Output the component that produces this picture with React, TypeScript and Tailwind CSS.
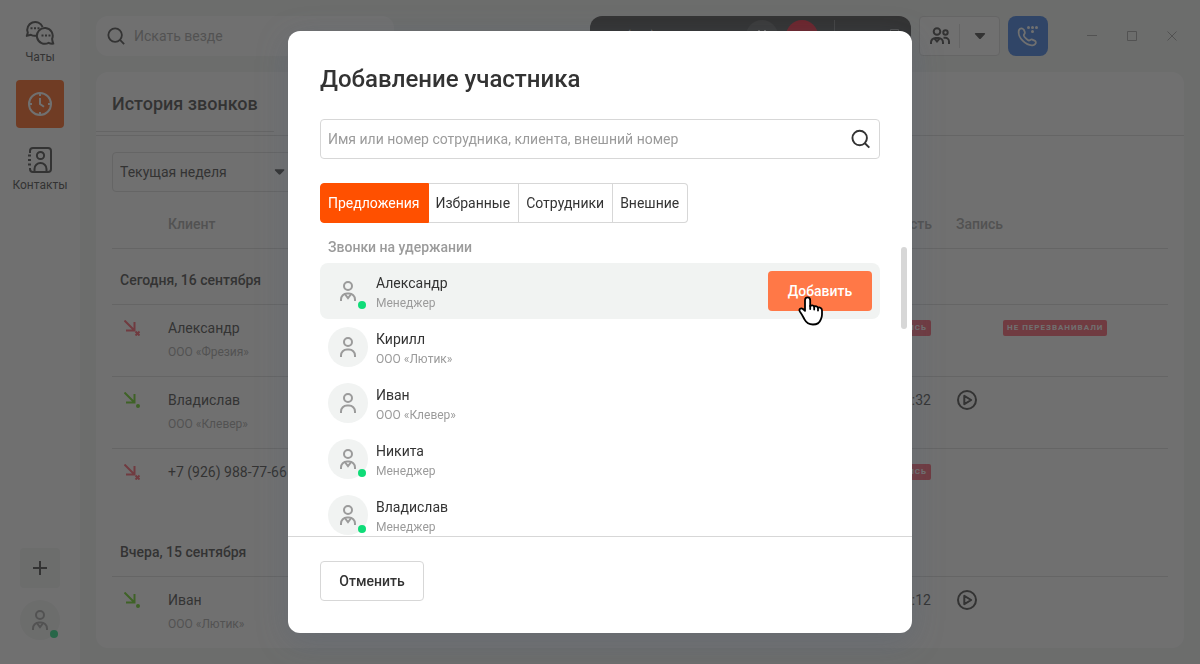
import type { ReactNode } from 'react';
import clsx from 'clsx';

const CONTACTS = [
  { name: 'Александр', note: 'Менеджер', employee: true, active: true },
  { name: 'Кирилл', note: 'ООО «Лютик»', employee: false, active: false },
  { name: 'Иван', note: 'ООО «Клевер»', employee: false, active: false },
  { name: 'Никита', note: 'Менеджер', employee: true, active: false },
  { name: 'Владислав', note: 'Менеджер', employee: true, active: false },
];

const TABS = ['Предложения', 'Избранные', 'Сотрудники', 'Внешние'];

type Call = { client: string; company?: string; duration?: string; missed?: boolean; status?: string };

const HISTORY: { day: string; calls: Call[] }[] = [
  {
    day: 'Сегодня, 16 сентября',
    calls: [
      { client: 'Александр', company: 'ООО «Фрезия»', missed: true, status: 'НЕ ПЕРЕЗВАНИВАЛИ' },
      { client: 'Владислав', company: 'ООО «Клевер»', duration: '01:32' },
      { client: '+7 (926) 988-77-66', missed: true },
    ],
  },
  { day: 'Вчера, 15 сентября', calls: [{ client: 'Иван', company: 'ООО «Лютик»', duration: '02:12' }] },
];

function SearchIcon() {
  return (
    <svg width="20" height="20" viewBox="0 0 20 20" fill="none" stroke="currentColor" strokeWidth="2" aria-hidden="true">
      <circle cx="9" cy="9" r="7.5" />
      <path d="M14.4 14.4 19 19" />
    </svg>
  );
}

function CaretIcon() {
  return (
    <svg width="12" height="8" viewBox="0 0 12 8" fill="currentColor" aria-hidden="true">
      <path d="M1.6 1h8.8c.7 0 1 .8.5 1.3L7 6.4a1.4 1.4 0 0 1-2 0L1.1 2.3C.6 1.8.9 1 1.6 1Z" />
    </svg>
  );
}

function PersonIcon({ employee }: { employee: boolean }) {
  return (
    <svg width="16" height="20" viewBox="0 0 16 20" fill="none" stroke="currentColor" strokeWidth="2" aria-hidden="true">
      <circle cx="8" cy="5" r="4" />
      <path d="M1 20v-1.500a6 6 0 0 1 6-6h2a6 6 0 0 1 6 6V20" />
      {employee && <path d="M4.800 13 8 17.200 11.200 13" />}
    </svg>
  );
}

function ChatsIcon() {
  return (
    <svg width="30" height="26" viewBox="0 0 30 26" fill="none" stroke="currentColor" strokeWidth="2" strokeLinejoin="round" aria-hidden="true">
      <path d="M11.500 16.600a7.800 7.800 0 0 1-5.600-.8L1.800 16.900l1-3.200A7.900 7.900 0 1 1 17.600 8" />
      <path d="M27.100 19.900a7.900 7.900 0 1 0-3.500 3.900c1.500.8 3 1 4.700.8-.7-1.500-1-3-1.200-4.700Z" />
      <path
        d="M5.500 8.200h2v2h-2zM9 8.200h2v2H9zM12.500 8.200h2v2h-2zM16.500 15.600h2v2h-2zM20 15.600h2v2h-2zM23.500 15.600h2v2h-2z"
        fill="currentColor"
        stroke="none"
      />
    </svg>
  );
}

function ClockIcon() {
  return (
    <svg width="24" height="24" viewBox="0 0 24 24" fill="none" stroke="currentColor" strokeWidth="2" aria-hidden="true">
      <circle cx="12" cy="12" r="11" />
      <path d="M12 1v3M12 20v3M1 12h3M20 12h3M12 6v6l4 2.800" />
    </svg>
  );
}

function ContactsIcon() {
  return (
    <svg width="26" height="28" viewBox="0 0 26 28" fill="none" stroke="currentColor" strokeWidth="2" aria-hidden="true">
      <path d="M3 7V5a3 3 0 0 1 3-3h15a3 3 0 0 1 3 3v18a3 3 0 0 1-3 3H6a3 3 0 0 1-3-3v-1" />
      <path d="M1 9.500h3M1 14h3M1 18.500h3" />
      <circle cx="13.500" cy="9.500" r="3.600" />
      <path d="M7.500 26v-3a6 6 0 0 1 12 0v3" />
    </svg>
  );
}

function GroupIcon() {
  return (
    <svg width="20" height="18" viewBox="0 0 20 18" fill="none" stroke="currentColor" strokeWidth="2" aria-hidden="true">
      <circle cx="7" cy="4.500" r="3.300" />
      <circle cx="15.500" cy="5.500" r="2.200" />
      <path d="M1 17v-1.500a4.500 4.500 0 0 1 4.500-4.500h3a4.500 4.500 0 0 1 4.500 4.500V17" />
      <path d="M4.500 11.500 7 14.500l2.500-3M13.500 10.800h1.700a3.800 3.800 0 0 1 3.800 3.800V17" />
    </svg>
  );
}

function DialIcon() {
  return (
    <svg width="22" height="22" viewBox="0 0 22 22" fill="none" stroke="currentColor" strokeWidth="1.800" strokeLinejoin="round" aria-hidden="true">
      <path d="M5.300 3.600c-1.500-.8-3.300.5-3.600 2.400-.4 2.900.9 6.600 4 9.700s6.800 4.900 9.900 4.600c1.900-.2 3.700-1.800 3.200-3.400-.2-.6-.7-1-1.300-1.300l-2.200-1c-1.700-.7-2.100 1-3.500.9-1.200-.1-4.900-3.700-5-5-.1-1.300 1.600-1.900 1-3.500l-1-2.300c-.3-.6-.9-.8-1.500-1.100Z" />
      <g fill="currentColor" stroke="none">
        <circle cx="11.500" cy="2.500" r="1.500" />
        <circle cx="15.500" cy="2.500" r="1.500" />
        <circle cx="19.500" cy="2.500" r="1.500" />
        <circle cx="15.500" cy="6.500" r="1.500" />
      </g>
    </svg>
  );
}

function CallArrow({ missed }: { missed?: boolean }) {
  return (
    <svg
      width="16"
      height="16"
      viewBox="0 0 16 16"
      fill="none"
      stroke="currentColor"
      strokeWidth="2"
      className={missed ? 'text-[#ff4d5e]' : 'text-[#5cd10a]'}
      aria-hidden="true"
    >
      <path d="m.5.500 9.500 9.500M10.500 2v8.500H2" />
      {missed ? <path d="m11.500 11.500 4 4m0-4-4 4" /> : <circle cx="14" cy="14" r="2" fill="currentColor" stroke="none" />}
    </svg>
  );
}

function PlayIcon() {
  return (
    <svg width="20" height="20" viewBox="0 0 20 20" fill="none" stroke="currentColor" strokeWidth="2" strokeLinejoin="round" aria-hidden="true">
      <circle cx="10" cy="10" r="9" />
      <path d="M7.300 5.800v8.400l6.900-4.200Z" />
    </svg>
  );
}

function HandCursor() {
  return (
    <svg width="26" height="30" viewBox="0 0 26 30" fill="#fff" stroke="#000" strokeWidth="1.800" strokeLinejoin="round" strokeLinecap="round" aria-hidden="true">
      <path d="M7 4.200c0-3.900 5.200-3.900 5.200 0V10c1.400-1.200 3.400-.8 4 .7 1.400-1 3.200-.4 3.700 1 2-.8 4.100.5 4.100 2.700v4.100c0 2.600-.7 3.600-1.300 5.100-1.200 3.400-3.400 4.900-7.700 4.900-4 0-6.600-1.500-8.500-5.100-1.300-2.500-2.300-4.700-4.500-7.700-1.700-2.600 1-4.300 3-2.700L7 14.900Z" />
      <path d="M12.200 10v3M16.200 11v2.500M20 12v2.500" fill="none" />
    </svg>
  );
}

function Avatar({ employee, plain }: { employee: boolean; plain?: boolean }) {
  return (
    <div
      className={clsx(
        'relative flex size-10 shrink-0 items-center justify-center rounded-full text-[#9b9b9b]',
        !plain && 'bg-[#f1f3f2]',
      )}
    >
      <PersonIcon employee={employee} />
      {employee && <span className="absolute right-0.5 bottom-0.5 size-2 rounded-full bg-[#0fdc78]" />}
    </div>
  );
}

function Badge({ children }: { children: ReactNode }) {
  return (
    <span className="rounded-xs bg-[#ff4d61] px-1 text-[8px] leading-4 font-bold tracking-[1px] whitespace-nowrap text-white">
      {children}
    </span>
  );
}

function Sidebar() {
  return (
    <nav className="flex w-20 shrink-0 flex-col items-center bg-white pt-[19px] pb-6 text-xs shadow-[inset_1px_0_#ffffff]">
      <a href="#chats" className="flex h-[61px] flex-col items-center">
        <ChatsIcon />
        <span className="mt-1">Чаты</span>
      </a>
      <a href="#history" aria-label="История звонков" className="flex size-12 items-center justify-center rounded bg-[#ff5000] text-white">
        <ClockIcon />
      </a>
      <a href="#contacts" className="mt-4.5 flex flex-col items-center">
        <ContactsIcon />
        <span className="mt-[3px]">Контакты</span>
      </a>
      <button type="button" aria-label="Добавить" className="mt-auto flex size-10 items-center justify-center rounded bg-[#f1f3f2]">
        <svg width="14" height="14" viewBox="0 0 14 14" stroke="currentColor" strokeWidth="2" aria-hidden="true">
          <path d="M7 0v14M0 7h14" />
        </svg>
      </button>
      <div className="mt-3">
        <Avatar employee />
      </div>
    </nav>
  );
}

function TopBar() {
  return (
    <header className="flex gap-2 pr-2 pl-4">
      <label className="mr-auto flex h-10 w-[298px] items-center rounded-xl bg-white px-[11px]">
        <SearchIcon />
        <input type="text" aria-label="Поиск" placeholder="Искать везде" className="ml-[9px] w-full text-sm outline-none placeholder:text-[#9b9b9b]" />
      </label>
      <div className="flex h-10 w-[321px] items-center rounded-xl bg-[#333333] pr-3 pl-5 text-xs text-white">
        <span className="mr-auto">+7 (926) 988-77-66</span>
        <button type="button" aria-label="Пауза" className="flex size-8 items-center justify-center rounded-full bg-[#4d4d4d]">
          <svg width="8" height="12" viewBox="0 0 8 12" stroke="currentColor" strokeWidth="2" aria-hidden="true">
            <path d="M1 0v12M7 0v12" />
          </svg>
        </button>
        <button type="button" aria-label="Завершить" className="ml-2 size-8 rounded-full bg-[#f0051e]" />
        <span className="mx-4 h-8 w-px bg-[#6b6b6b]" />
        <button type="button" aria-label="Развернуть" className="ml-8 flex h-4 w-4 justify-end">
          <svg width="9" height="16" viewBox="0 0 9 16" fill="none" stroke="#999999" aria-hidden="true">
            <path d="M.5 1.500h8v13h-8z" />
          </svg>
        </button>
      </div>
      <div className="flex h-10 items-center rounded border border-[#d9d9d9] bg-white">
        <button type="button" aria-label="Участники" className="flex w-[39px] justify-center">
          <GroupIcon />
        </button>
        <span className="h-6 w-px bg-[#d9d9d9]" />
        <button type="button" aria-label="Ещё" className="flex w-[39px] justify-center">
          <CaretIcon />
        </button>
      </div>
      <button type="button" aria-label="Набрать номер" className="flex size-10 items-center justify-center rounded-lg bg-[#2870df] text-white">
        <DialIcon />
      </button>
      <div className="ml-4 flex text-[#9b9b9b]">
        <button type="button" aria-label="Свернуть окно" className="flex size-10 items-center justify-center">
          <svg width="10" height="10" viewBox="0 0 10 10" stroke="currentColor" aria-hidden="true">
            <path d="M0 4.500h10" />
          </svg>
        </button>
        <button type="button" aria-label="Развернуть окно" className="flex size-10 items-center justify-center">
          <svg width="10" height="10" viewBox="0 0 10 10" fill="none" stroke="currentColor" aria-hidden="true">
            <path d="M.5.500h9v9h-9z" />
          </svg>
        </button>
        <button type="button" aria-label="Закрыть окно" className="flex size-10 items-center justify-center">
          <svg width="10" height="10" viewBox="0 0 10 10" stroke="currentColor" aria-hidden="true">
            <path d="m.5.500 9 9m0-9-9 9" />
          </svg>
        </button>
      </div>
    </header>
  );
}

function CallRow({ call, last }: { call: Call; last: boolean }) {
  const cell = clsx('h-18 pt-[11px] align-top leading-6', !last && 'border-b border-[#d9d9d9]');
  return (
    <tr>
      <td className={clsx(cell, 'pl-3')}>
        <div className="flex h-6 items-center">
          <CallArrow missed={call.missed} />
        </div>
      </td>
      <td className={cell}>
        <div>{call.client}</div>
        {call.company && <div className="text-xs leading-6 text-[#9b9b9b]">{call.company}</div>}
      </td>
      <td className={clsx(cell, 'pr-px')}>
        <div className="flex h-6 items-center justify-end">{call.missed ? <Badge>НЕ ДОЗВОНИЛИСЬ</Badge> : call.duration}</div>
      </td>
      <td className={clsx(cell, 'pl-6')}>
        {call.duration && (
          <button type="button" aria-label="Прослушать" className="flex h-6 w-5.5 items-center justify-center">
            <PlayIcon />
          </button>
        )}
      </td>
      <td className={cell}>
        <div className="flex h-6 items-center">{call.status && <Badge>{call.status}</Badge>}</div>
      </td>
    </tr>
  );
}

function HistoryPanel() {
  const head = 'h-[57px] border-b border-[#d9d9d9] pb-3 align-bottom font-medium leading-6 text-[#9b9b9b]';
  return (
    <section className="mx-4 mb-4 min-h-0 flex-1 overflow-hidden rounded-xl bg-white">
      <div className="flex h-16 flex-col justify-end border-b border-[#d9d9d9] pb-[3px]">
        <h2 className="flex h-15 w-[178px] items-center border-b border-[#d9d9d9] pt-1 pl-4 text-lg font-medium">История звонков</h2>
      </div>
      <div className="px-4 pt-4">
        <label className="flex h-10 w-[184px] items-center rounded border border-[#d9d9d9] pr-2.5 pl-[7px]">
          <select aria-label="Период" className="w-full appearance-none text-sm outline-none">
            <option>Текущая неделя</option>
          </select>
          <CaretIcon />
        </label>
        <table className="w-full table-fixed border-separate border-spacing-0 text-left text-sm">
          <thead>
            <tr>
              <th className={clsx(head, 'w-14')} aria-label="Тип" />
              <th className={head}>Клиент</th>
              <th className={clsx(head, 'text-right')}>Длительность</th>
              <th className={clsx(head, 'w-[71px] pl-6')}>Запись</th>
              <th className={clsx(head, 'w-[165px]')} aria-label="Статус" />
            </tr>
          </thead>
          {HISTORY.map((group) => (
            <tbody key={group.day}>
              <tr>
                <th colSpan={5} className="h-14 border-b border-[#d9d9d9] pb-3 pl-2 align-bottom leading-6 font-medium">
                  {group.day}
                </th>
              </tr>
              {group.calls.map((call, i) => (
                <CallRow key={call.client} call={call} last={i === group.calls.length - 1} />
              ))}
            </tbody>
          ))}
        </table>
      </div>
    </section>
  );
}

function AddMemberDialog() {
  return (
    <div className="fixed inset-0 flex items-center justify-center bg-[#333333]/70">
      <div
        role="dialog"
        aria-modal="true"
        aria-labelledby="dialog-title"
        className="w-full max-w-[624px] overflow-hidden rounded-xl bg-white shadow-[0_8px_32px_rgba(80,95,120,0.3)]"
      >
        <div className="px-8 pt-8">
          <h1 id="dialog-title" className="text-2xl leading-8 font-medium">
            Добавление участника
          </h1>
          <label className="mt-6 flex h-10 items-center rounded border border-[#d7d7d7] pr-[9px] pl-[7px]">
            <input
              type="text"
              aria-label="Поиск участника"
              placeholder="Имя или номер сотрудника, клиента, внешний номер"
              className="w-full text-sm outline-none placeholder:text-[#9b9b9b]"
            />
            <SearchIcon />
          </label>
          <div role="tablist" className="mt-6 flex h-10 text-sm">
            {TABS.map((tab, i) => (
              <button
                key={tab}
                type="button"
                role="tab"
                aria-selected={i === 0}
                className={clsx(
                  'border-y border-r pr-2 pl-[7px] last:rounded-r',
                  i === 0 ? 'rounded-l border-l border-[#ff5000] bg-[#ff5000] text-white' : 'border-[#d7d7d7]',
                )}
              >
                {tab}
              </button>
            ))}
          </div>
        </div>
        <div className="flex h-[314px] border-b border-[#d7d7d7] pl-8">
          <div className="flex-1 overflow-hidden pt-3">
            <h2 className="mb-1 pl-2 text-sm leading-6 font-medium text-[#9b9b9b]">Звонки на удержании</h2>
            <ul>
              {CONTACTS.map((contact) => (
                <li key={contact.name} className={clsx('flex h-14 gap-2 rounded-lg p-2', contact.active && 'bg-[#f1f3f2]')}>
                  <Avatar employee={contact.employee} plain={contact.active} />
                  <div>
                    <div className="text-sm leading-6">{contact.name}</div>
                    <div className="text-xs leading-4 text-[#9b9b9b]">{contact.note}</div>
                  </div>
                  {contact.active && (
                    <div className="relative ml-auto">
                      <button type="button" className="h-10 w-26 rounded bg-[#ff7847] text-sm font-medium text-white">
                        Добавить
                      </button>
                      <span className="absolute top-[25px] left-[30px]">
                        <HandCursor />
                      </span>
                    </div>
                  )}
                </li>
              ))}
            </ul>
          </div>
          <div className="flex w-8 justify-end pt-6 pr-[5px]">
            <span className="h-[82px] w-1.5 rounded-full bg-[#d7d7d7]" />
          </div>
        </div>
        <div className="px-8 pt-6 pb-8">
          <button type="button" className="h-10 w-26 rounded border border-[#d7d7d7] text-sm font-medium">
            Отменить
          </button>
        </div>
      </div>
    </div>
  );
}

export default function App() {
  return (
    <div className="flex h-screen bg-[#f1f3f2] font-['Roboto','Noto_Sans',sans-serif] text-[#333333]">
      <Sidebar />
      <main className="flex min-w-0 flex-1 flex-col gap-4 pt-4">
        <TopBar />
        <HistoryPanel />
      </main>
      <AddMemberDialog />
    </div>
  );
}
